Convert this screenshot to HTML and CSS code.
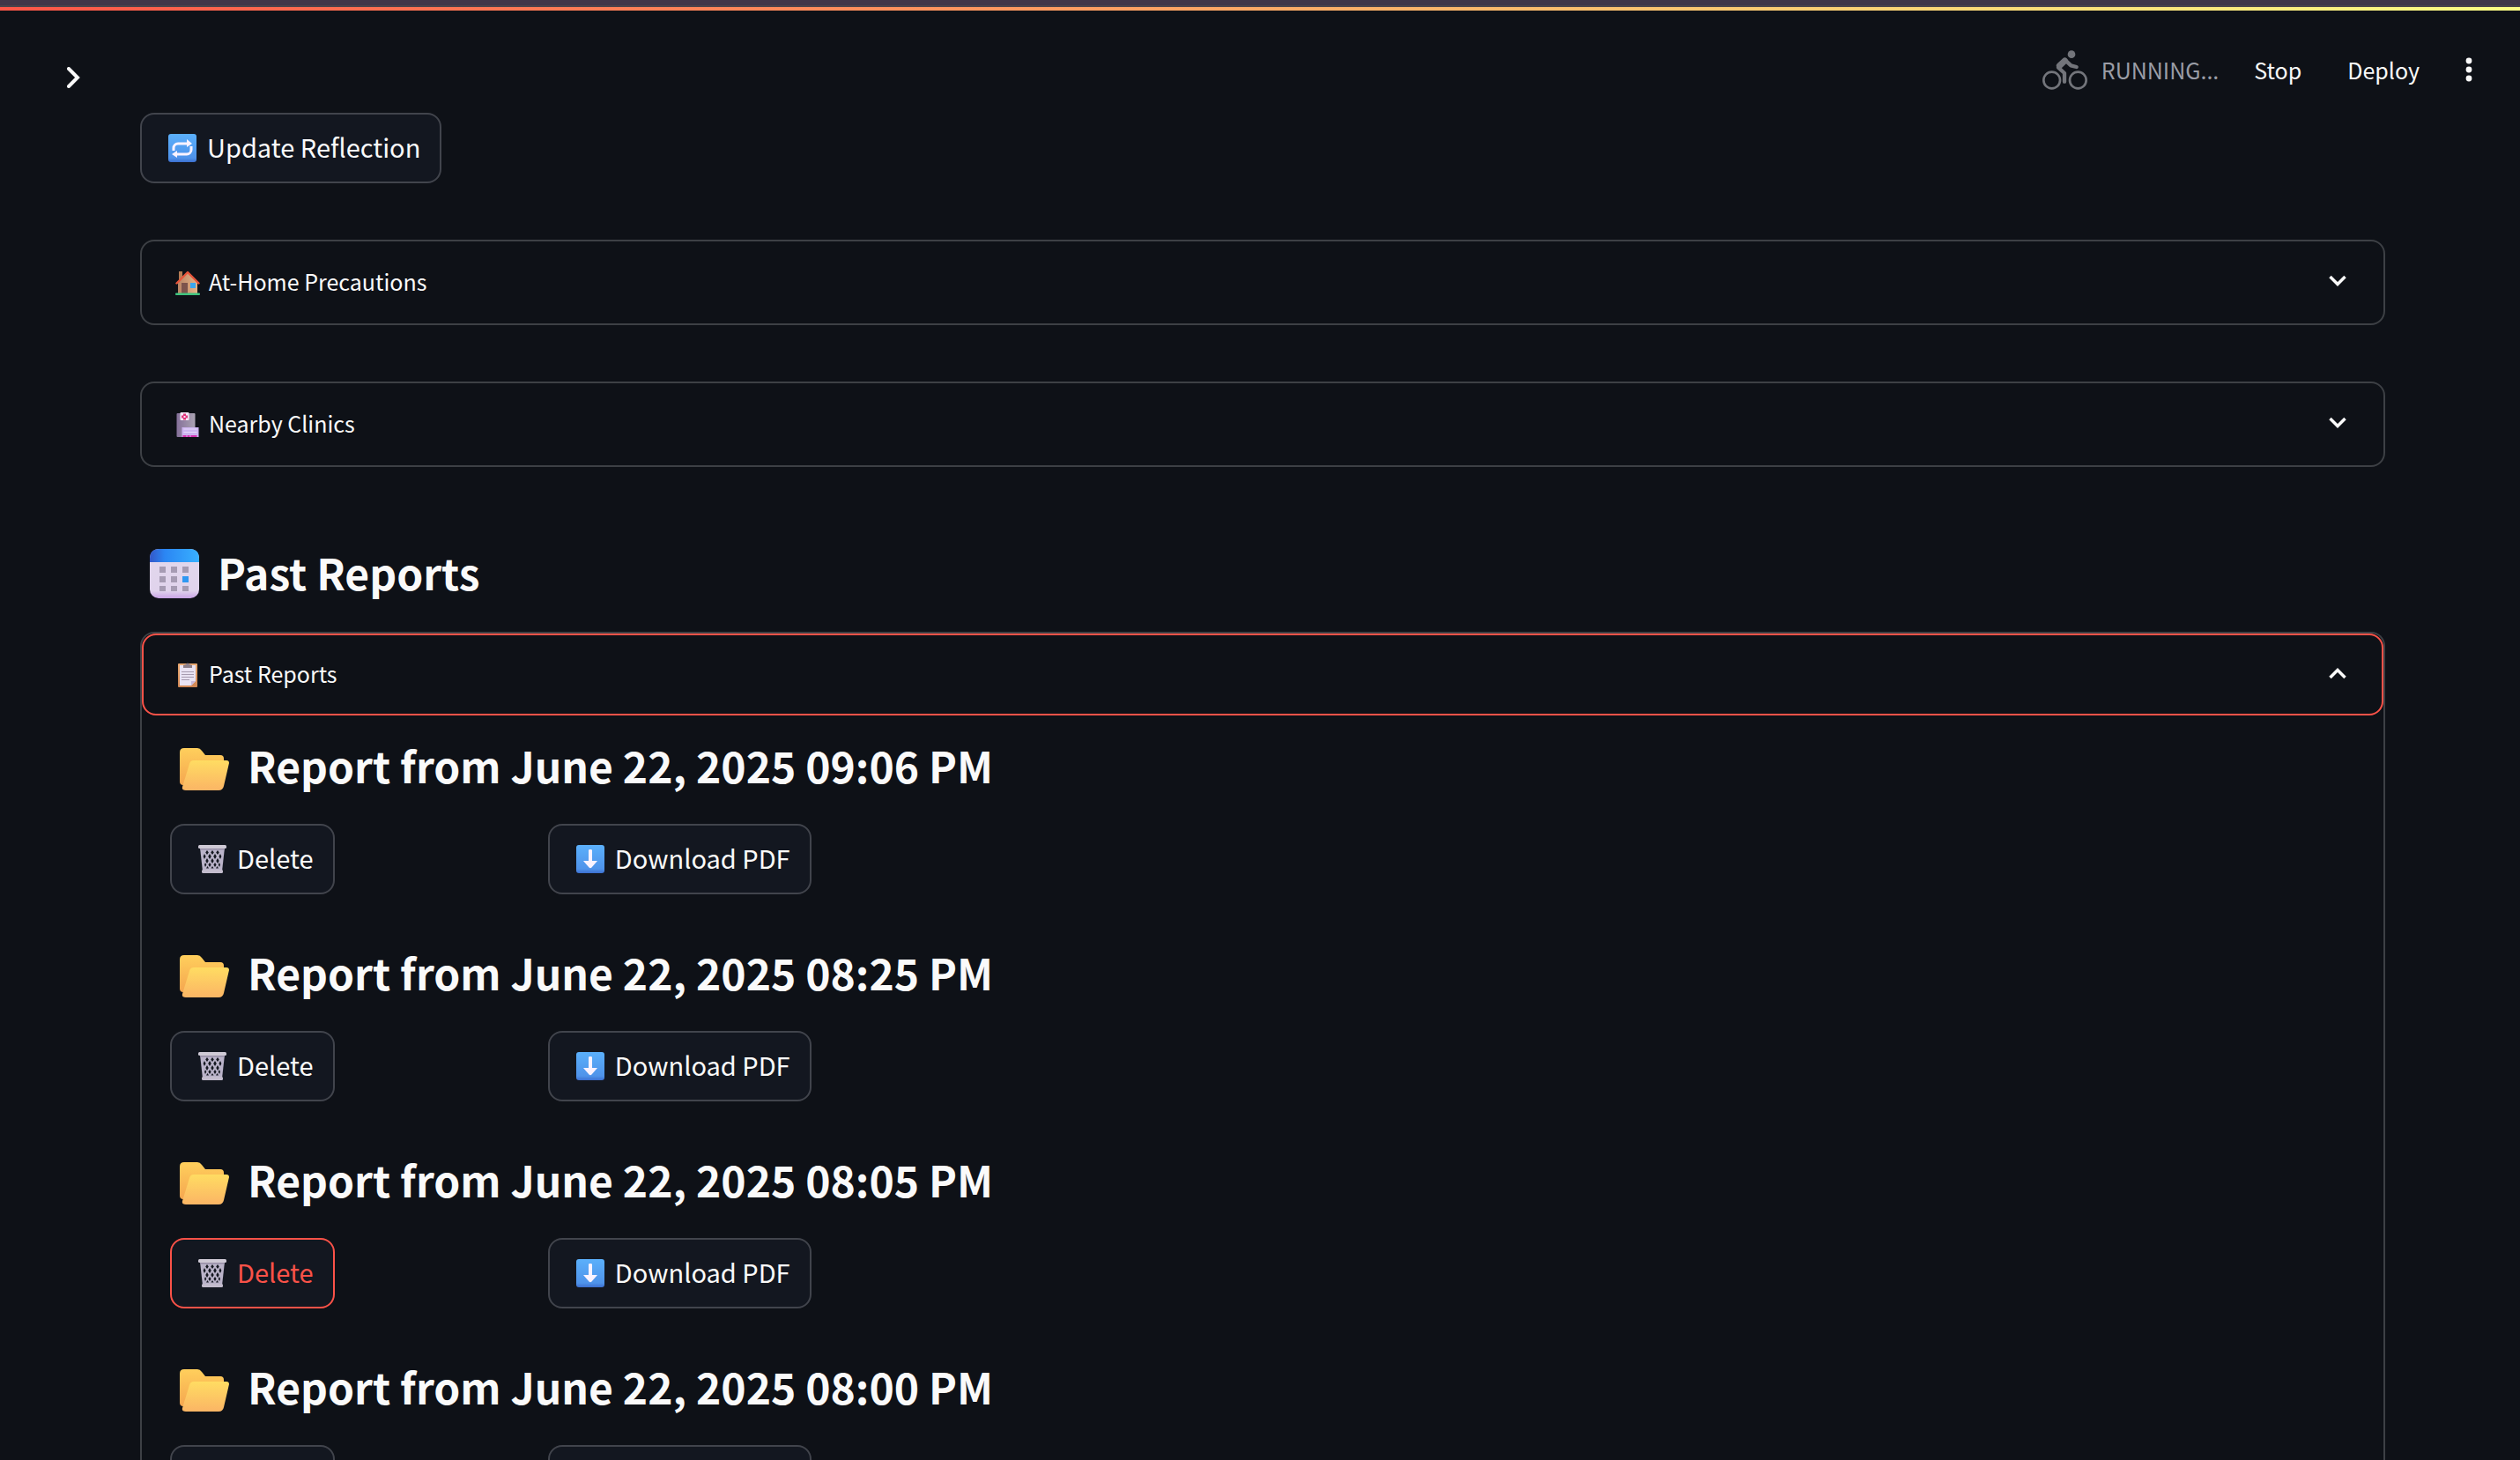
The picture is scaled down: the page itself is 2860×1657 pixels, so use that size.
FILE: index.html
```html
<!DOCTYPE html>
<html lang="en">
<head>
<meta charset="utf-8">
<title>Past Reports</title>
<meta name="viewport" content="width=device-width, initial-scale=1">
<link rel="stylesheet" href="styles.css">
</head>
<body>
<svg class="sprite" aria-hidden="true">
  <defs>
    <linearGradient id="blue" x1="0" y1="0" x2="0" y2="1"><stop offset="0" stop-color="#5bb0fb"/><stop offset=".85" stop-color="#4f93ea"/><stop offset="1" stop-color="#3c6fd0"/></linearGradient>
    <linearGradient id="cal-top" x1="0" x2="1"><stop offset="0" stop-color="#3357c8"/><stop offset=".3" stop-color="#2b86f3"/><stop offset="1" stop-color="#38b0ff"/></linearGradient>
    <linearGradient id="cal-page" x1="0" y1="0" x2="0" y2="1"><stop offset="0" stop-color="#e2d8ec"/><stop offset=".85" stop-color="#e0d3ec"/><stop offset="1" stop-color="#c9a3e6"/></linearGradient>
    <linearGradient id="folder-back" x1="0" y1="0" x2="0" y2="1"><stop offset="0" stop-color="#ffcf5c"/><stop offset="1" stop-color="#f5a650"/></linearGradient>
    <linearGradient id="folder-front" x1="0" y1="0" x2="0" y2="1"><stop offset="0" stop-color="#ffdc62"/><stop offset="1" stop-color="#fbb565"/></linearGradient>
    <linearGradient id="wall" x1="0" x2="1"><stop offset="0" stop-color="#b98566"/><stop offset="1" stop-color="#e6b487"/></linearGradient>
    <linearGradient id="tower" x1="0" x2="1"><stop offset="0" stop-color="#85709a"/><stop offset="1" stop-color="#aaa3b2"/></linearGradient>
    <linearGradient id="board" x1="0" y1="0" x2="0" y2="1"><stop offset="0" stop-color="#eaaa72"/><stop offset="1" stop-color="#cf8552"/></linearGradient>
    <symbol id="repeat" viewBox="0 0 32 32">
      <rect width="32" height="32" rx="3" fill="url(#blue)"/>
      <g fill="none" stroke="#fbf3ff" stroke-width="3"><path d="M6 19v-3a5 5 0 0 1 5-5h11"/><path d="M26 14v4a5 5 0 0 1-5 5H10"/></g>
      <path fill="#fbf3ff" d="m21 6 6 5-6 4zM10 19l-6 4 6 4z"/>
    </symbol>
    <symbol id="house" viewBox="0 0 28 28">
      <path fill="#b47c55" d="M4 1h4v12H4z"/>
      <path fill="url(#wall)" d="M3 13 14 2l11 11v14H3z"/>
      <path fill="none" stroke="#e8553b" stroke-width="2.4" stroke-linecap="round" stroke-linejoin="round" d="m1.500 14.500 12.500-12.500 12.500 12.500"/>
      <path fill="#7d544c" d="M7 14h7v12H7z"/><path fill="#3ba7ef" d="M17 14h6v6h-6z"/>
      <rect y="25.500" width="28" height="2.500" rx="1" fill="#3fc57f"/>
    </symbol>
    <symbol id="clinic" viewBox="0 0 25 28">
      <rect y="1" width="21" height="27" rx="1" fill="url(#tower)"/>
      <rect x="4" width="10" height="9" rx="1" fill="#f4e8f8"/>
      <path fill="#e0357c" d="M7.500 1.500h3v2h2v3h-2v2h-3v-2h-2v-3h2z"/><path fill="#f4e8f8" d="M8 4h2v2H8z"/>
      <path fill="#cdb4f0" d="M6 17h19v11H6z"/><path fill="#e6d9fb" d="M8 18.500h15v1H8zM8 22h15v1H8z"/>
      <path fill="#d22fae" d="M7 26h4v2H7zm5 0h3v2h-3zm4 0h7v2h-7z"/>
    </symbol>
    <symbol id="clipboard" viewBox="0 0 22 28">
      <rect y="1" width="22" height="27" rx="1" fill="url(#board)"/>
      <path fill="#e9e3f3" d="M2 3h18v18l-5 5H2z"/><path fill="#c8b9da" d="M15 26v-5h5z"/>
      <path fill="#8b7f8b" d="M6 6V3l3-1q2-3 4 0l3 1v3z"/>
      <path fill="none" stroke="#a69bb0" d="M4 10.500h14M4 13.500h14M4 16.500h14M4 19.500h9"/>
    </symbol>
    <symbol id="calendar" viewBox="0 0 56 56">
      <rect width="56" height="56" rx="10" fill="url(#cal-page)"/>
      <path fill="url(#cal-top)" d="M0 15v-4Q0 0 11 0h34q11 0 11 11v4z"/>
      <path fill="#a69bb3" d="M11 20h7v7h-7zm13 0h7v7h-7zm13 0h7v7h-7zM11 31h7v7h-7zm13 0h7v7h-7zM11 42h7v6h-7zm13 0h7v6h-7zm13 0h7v6h-7z"/>
      <path fill="#2f97f2" d="M37 31h7v7h-7z"/>
    </symbol>
    <symbol id="folder" viewBox="0 0 56 48">
      <path fill="url(#folder-back)" d="M0 5q0-5 5-5h15q3 0 5 3l4 5h17q4 0 4 4v30H4q-4 0-4-4z"/>
      <path fill="url(#folder-front)" d="M16 14h37q3 0 3 3l-6 26q-1 5-6 5H7q-5 0-4-4l8-26q1-4 5-4z"/>
    </symbol>
    <symbol id="trash" viewBox="0 0 32 32">
      <path fill="#bab3c9" d="M2 3h28l-3 27H5z"/>
      <path fill="#151821" d="m10 6 1.800 2.500L10 11 8.200 8.500zm6 0 1.800 2.500L16 11l-1.800-2.500zm6 0 1.800 2.500L22 11l-1.800-2.500zM7 10l1.600 3L7 16l-1.400-3zm6 0 1.800 3-1.800 3-1.800-3zm6 0 1.800 3-1.800 3-1.800-3zm6 0 1.400 3-1.400 3-1.600-3zM10 15l1.700 3-1.700 3-1.700-3zm6 0 1.700 3-1.700 3-1.700-3zm6 0 1.700 3-1.700 3-1.700-3zM8 20l1.300 2.500L8 25l-1-2.500zm5 0 1.600 2.500L13 25l-1.600-2.500zm6 0 1.600 2.500L19 25l-1.600-2.500zm5 0 1 2.500-1 2.500-1.300-2.500zM10.500 24l1.500 2.500h-3zm5.500 0 1.500 2.500h-3zm5.500 0 1.500 2.500h-3z"/>
      <rect width="32" height="4" rx="1.500" fill="#cfcad6"/><path fill="#978ea6" d="M2 4h28v1.500H2z"/>
      <rect x="4" y="28" width="24" height="4" rx="1.500" fill="#c3bccd"/>
    </symbol>
    <symbol id="download" viewBox="0 0 32 32">
      <rect width="32" height="32" rx="3" fill="url(#blue)"/>
      <path fill="#fbf3ff" d="M14 6q0-1 2-1t2 1v12h6l-6.500 7.500q-1.500 1.500-3 0L8 18h6z"/>
    </symbol>
    <symbol id="bike" viewBox="0 0 153 135">
      <g fill="none" stroke="currentColor" stroke-linecap="round" stroke-linejoin="round">
        <circle cx="32" cy="102" r="28" stroke-width="8"/><circle cx="121" cy="102" r="28" stroke-width="8"/>
        <path stroke-width="21" d="m58 53 18-17"/><path stroke-width="13" d="m79 35 18 17 19 5M54 59l21 19v29"/>
      </g>
      <circle cx="99" cy="14" r="13" fill="currentColor"/>
    </symbol>
    <symbol id="chevron" viewBox="0 0 20 14"><path fill="none" stroke="currentColor" stroke-width="3.500" d="m1.500 2 8.500 8.500 8.500-8.500"/></symbol>
    <symbol id="chevron-right" viewBox="0 0 16 24"><path fill="none" stroke="currentColor" stroke-width="4" stroke-linecap="round" d="m2 2 10 10-10 10"/></symbol>
    <symbol id="dots" viewBox="0 0 8 28"><g fill="currentColor"><circle cx="4" cy="4" r="3.400"/><circle cx="4" cy="14" r="3.400"/><circle cx="4" cy="24" r="3.400"/></g></symbol>
  </defs>
</svg>

<div class="window-edge"></div>
<div class="decoration"></div>

<header class="header">
  <button class="plain sidebar-toggle" type="button" aria-label="Open sidebar"><svg class="icon-right"><use href="#chevron-right"/></svg></button>
  <div class="toolbar">
    <div class="status"><svg class="icon-bike" aria-hidden="true"><use href="#bike"/></svg><span>RUNNING...</span></div>
    <button class="plain stop" type="button">Stop</button>
    <button class="plain" type="button">Deploy</button>
    <button class="plain" type="button" aria-label="Main menu"><svg class="icon-dots"><use href="#dots"/></svg></button>
  </div>
</header>

<main class="content">
  <button class="button" type="button"><svg class="icon-button"><use href="#repeat"/></svg>Update Reflection</button>

  <details class="expander">
    <summary class="summary"><svg class="icon-summary"><use href="#house"/></svg><span class="label">At-Home Precautions</span><svg class="icon-chevron"><use href="#chevron"/></svg></summary>
  </details>
  <details class="expander">
    <summary class="summary"><svg class="icon-summary"><use href="#clinic"/></svg><span class="label">Nearby Clinics</span><svg class="icon-chevron"><use href="#chevron"/></svg></summary>
  </details>

  <h3 class="heading section-heading"><svg class="icon-calendar"><use href="#calendar"/></svg>Past Reports</h3>

  <details class="expander reports" open>
    <summary class="summary focused"><svg class="icon-summary"><use href="#clipboard"/></svg><span class="label">Past Reports</span><svg class="icon-chevron"><use href="#chevron"/></svg></summary>
    <div class="report-list">
      <section class="report">
        <h3 class="heading"><svg class="icon-folder"><use href="#folder"/></svg>Report from June 22, 2025 09:06 PM</h3>
        <div class="actions">
          <button class="button" type="button"><svg class="icon-button"><use href="#trash"/></svg>Delete</button>
          <button class="button" type="button"><svg class="icon-button"><use href="#download"/></svg>Download PDF</button>
        </div>
      </section>
      <section class="report">
        <h3 class="heading"><svg class="icon-folder"><use href="#folder"/></svg>Report from June 22, 2025 08:25 PM</h3>
        <div class="actions">
          <button class="button" type="button"><svg class="icon-button"><use href="#trash"/></svg>Delete</button>
          <button class="button" type="button"><svg class="icon-button"><use href="#download"/></svg>Download PDF</button>
        </div>
      </section>
      <section class="report">
        <h3 class="heading"><svg class="icon-folder"><use href="#folder"/></svg>Report from June 22, 2025 08:05 PM</h3>
        <div class="actions">
          <button class="button active" type="button"><svg class="icon-button"><use href="#trash"/></svg>Delete</button>
          <button class="button" type="button"><svg class="icon-button"><use href="#download"/></svg>Download PDF</button>
        </div>
      </section>
      <section class="report">
        <h3 class="heading"><svg class="icon-folder"><use href="#folder"/></svg>Report from June 22, 2025 08:00 PM</h3>
        <div class="actions">
          <button class="button" type="button"><svg class="icon-button"><use href="#trash"/></svg>Delete</button>
          <button class="button" type="button"><svg class="icon-button"><use href="#download"/></svg>Download PDF</button>
        </div>
      </section>
    </div>
  </details>
</main>
</body>
</html>
```
FILE: styles.css
```css
:root {
  --bg: #0e1117;
  --surface: #131720;
  --border: #3d4045;
  --text: #fafafa;
  --muted: #9a9da6;
  --accent: #fa5248;
}

* { box-sizing: border-box; }

body {
  margin: 0;
  height: 100vh;
  overflow: hidden;
  background: var(--bg);
  color: var(--text);
  font-family: "Noto Sans CJK SC", "Noto Sans", sans-serif;
  font-size: 25px;
}

svg { flex: none; }
.sprite { position: absolute; width: 0; height: 0; }

.window-edge {
  height: 8px;
  background: #403648;
  border-bottom: 2px solid #49434b;
}

.decoration {
  height: 4px;
  background: linear-gradient(90deg, #fc5648, #fdfd85);
}

.header {
  display: flex;
  justify-content: space-between;
  align-items: flex-start;
  height: 116px;
  padding: 40px 54px 0 76px;
}

.plain {
  display: flex;
  align-items: center;
  padding: 0;
  border: 0;
  background: none;
  color: inherit;
  font: inherit;
}

.sidebar-toggle { height: 72px; }

.toolbar {
  display: flex;
  align-items: center;
  height: 54px;
  gap: 52px;
}

.status {
  display: flex;
  align-items: center;
  gap: 16px;
  color: var(--muted);
}
.stop { margin-left: -12px; }

.content { padding: 0 153px 0 159px; }

.button {
  display: inline-flex;
  align-items: center;
  gap: 12px;
  height: 80px;
  padding: 0 22px 4px 30px;
  border: 2px solid #41444c;
  border-radius: 16px;
  background: var(--surface);
  color: var(--text);
  font: inherit;
  font-size: 29px;
  white-space: nowrap;
}
.button.active { border-color: var(--accent); color: var(--accent); }

.content > .button { display: flex; }

.expander {
  margin-top: 64px;
  border: 2px solid var(--border);
  border-radius: 16px;
}

.summary {
  display: flex;
  align-items: center;
  gap: 10px;
  height: 93px;
  padding: 0 42px 4px 38px;
  list-style: none;
}
.summary::-webkit-details-marker { display: none; }
.label { flex: 1; }
.focused { border: 2px solid var(--accent); border-radius: 16px; padding: 0 40px 4px 36px; }
details[open] .icon-chevron { transform: rotate(180deg); }

.heading {
  display: flex;
  align-items: center;
  gap: 21px;
  height: 68px;
  margin: 0;
  padding: 0 0 4px 11px;
  font-size: 48px;
  font-weight: 600;
  white-space: nowrap;
}
.section-heading { margin-top: 87px; }

.reports { margin-top: 32px; border-bottom: 0; }
.report-list {
  display: grid;
  gap: 56px;
  padding: 24px 32px;
}
.actions {
  display: grid;
  grid-template-columns: 16% 1fr;
  justify-items: start;
  gap: 32px;
  margin-top: 31px;
}

.icon-right { width: 16px; height: 24px; }
.icon-bike { width: 51px; height: 45px; color: #73757b; }
.icon-dots { width: 8px; height: 28px; }
.icon-button { width: 32px; height: 32px; margin-top: 4px; }
.icon-summary { width: 28px; height: 28px; margin-top: 4px; }
.icon-chevron { width: 20px; height: 14px; }
.icon-calendar { width: 56px; height: 56px; margin-top: 4px; }
.icon-folder { width: 56px; height: 48px; margin-top: 10px; }
```
